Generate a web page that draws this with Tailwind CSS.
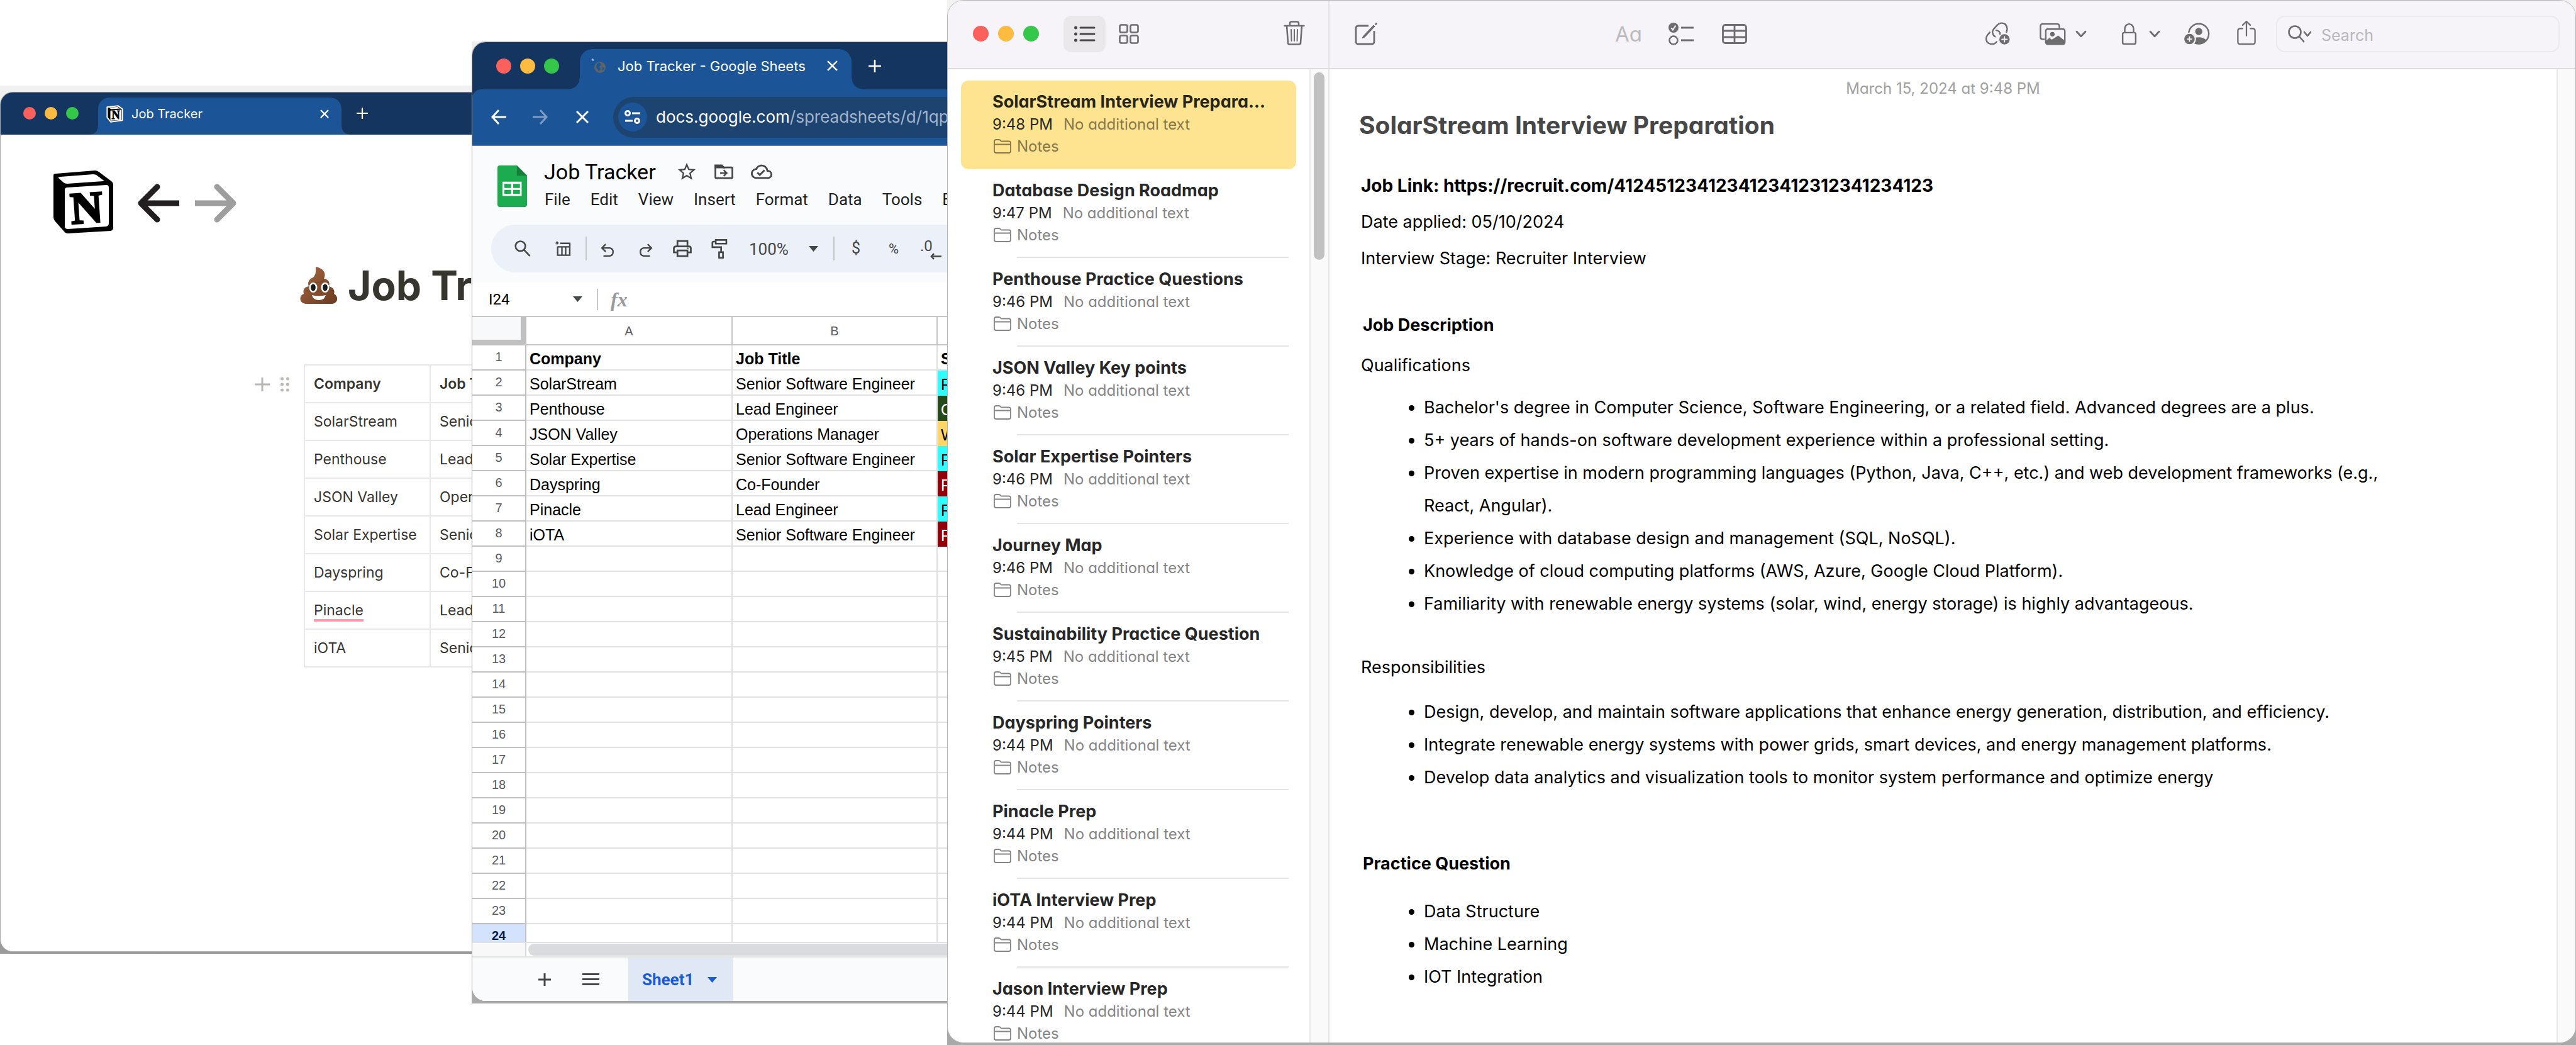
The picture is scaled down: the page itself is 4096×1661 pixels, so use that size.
<!DOCTYPE html>
<html lang="en">
<head>
<meta charset="utf-8">
<title>Job search desktop</title>
<script src="https://cdn.jsdelivr.net/npm/@tailwindcss/browser@4"></script>
</head>
<body class="bg-white">
<div class="relative h-screen overflow-hidden font-[Inter,sans-serif]">

  <!-- Notion window -->
  <section aria-label="Notion" class="absolute left-0 top-[136px] bottom-[145px] w-[1200px] overflow-hidden bg-gradient-to-b from-[#f1f1f1] to-[#9a9a9a] pt-[10px] pb-[3px]">
    <div class="flex h-full flex-col overflow-hidden rounded-[20px] border border-[#a9a9a9] bg-white">
      <header class="flex h-[67px] shrink-0 items-end bg-[#13355f] pl-[36px]">
        <div class="mb-[24px] flex gap-[14px]">
          <span class="size-[20px] rounded-full bg-[#fc605c]"></span>
          <span class="size-[20px] rounded-full bg-[#fdbc40]"></span>
          <span class="size-[20px] rounded-full bg-[#34c749]"></span>
        </div>
        <div class="relative ml-[31px] flex h-[59px] w-[387px] items-center rounded-t-[18px] bg-[#1b5497] px-[13px] text-white">
          <svg class="absolute -left-[16px] bottom-0" width="16" height="16" fill="#1b5497" aria-hidden="true"><path d="M0 16Q16 16 16 0V16Z"/></svg>
          <svg class="absolute -right-[16px] bottom-0" width="16" height="16" fill="#1b5497" aria-hidden="true"><path d="M16 16Q0 16 0 0V16Z"/></svg>
          <svg class="mb-[8px]" width="27" height="28" viewBox="-5 -5 105 110" aria-hidden="true"><path d="M0 8 68 0 95 20V90L22 100 0 72Z" fill="#000" stroke="#fff" stroke-width="8" stroke-linejoin="round"/><path d="M12 11 64 7 80 17 24 21Z" fill="#fff"/><path d="M20 32Q20 28 25 28L84 24Q88 24 88 28V84Q88 88 84 88L24 92Q20 92 20 88Z" fill="#fff"/><text x="28" y="82" font-family="Liberation Serif" font-weight="bold" font-size="72" stroke="#000" stroke-width="3">N</text></svg>
          <span class="mb-[8px] ml-[13px] text-[20px] leading-[28px]">Job Tracker</span>
          <button aria-label="Close tab" class="mb-[8px] ml-auto mr-[6px]"><svg width="16" height="16" viewBox="0 0 16 16" stroke="#fff" stroke-width="2.4"><path d="M2 2 14 14M14 2 2 14"/></svg></button>
        </div>
        <button aria-label="New tab" class="mb-[25px] ml-[24px]"><svg width="18" height="18" viewBox="0 0 18 18" stroke="#fff" stroke-width="2.2"><path d="M9 0V18M0 9H18"/></svg></button>
      </header>
      <main class="text-[#37352f]">
        <div class="flex items-center pl-[84px] pt-[57px]">
          <svg width="95" height="100" viewBox="0 0 95 100" role="img" aria-label="Notion logo"><path d="M0 8Q0 5 4 5L66 0Q69 0 72 2L92 17Q95 19 95 22V91Q95 95 91 96L23 100Q19 100 17 97L2 80Q0 77 0 74Z"/><path d="M8 12Q7 10 11 10L63 6Q66 6 68 7L80 16Q82 17 79 17L22 21Q18 21 16 19Z" fill="#fff"/><path d="M18 31Q18 27 22 27L84 23Q88 23 88 27V84Q88 88 84 89L23 93Q18 93 18 89Z" fill="#fff"/><text x="27" y="83" font-family="Liberation Serif" font-weight="bold" font-size="71" stroke="#000" stroke-width="3" transform="rotate(-4 53 60)">N</text></svg>
          <button aria-label="Back" class="ml-[39px] pt-[4px]"><svg width="66" height="62" viewBox="0 0 66 62" fill="none" stroke="#231f20" stroke-width="9"><path d="M31 5 5 31 31 57" stroke-linecap="round" stroke-linejoin="round"/><path d="M5 31H66"/></svg></button>
          <button aria-label="Forward" class="ml-[25px] pt-[4px]"><svg width="66" height="62" viewBox="0 0 66 62" fill="none" stroke="#9e9e9e" stroke-width="9"><path d="M35 5 61 31 35 57" stroke-linecap="round" stroke-linejoin="round"/><path d="M61 31H0"/></svg></button>
        </div>
        <div class="mt-[43px] flex items-center gap-[16px] pl-[476px]">
          <svg width="60" height="60" viewBox="0 0 60 60" aria-hidden="true">
            <defs><linearGradient id="br" x1="0" y1="0" x2="1" y2="1"><stop offset="0" stop-color="#a5683f"/><stop offset="1" stop-color="#6b3a20"/></linearGradient></defs>
            <path d="M25 0C38 3 42 10 38 19 46 20 48 26 46 31 53 33 56 38 54 43 61 46 62 58 50 59H10C-2 58-2 46 6 43 4 36 8 32 14 31 11 25 15 19 21 17 26 12 25 6 25 0Z" fill="url(#br)"/>
            <path d="M39 19C36 25 26 26 20 25M46 31C40 40 20 41 10 38" fill="none" stroke="#7a4729" stroke-width="1.5"/>
            <ellipse cx="21" cy="33" rx="6.500" ry="8" fill="#fff"/><ellipse cx="40" cy="33" rx="6.500" ry="8" fill="#fff"/>
            <ellipse cx="21" cy="33" rx="3.800" ry="5.500" fill="#1a1a1a"/><ellipse cx="40" cy="33" rx="3.800" ry="5.500" fill="#1a1a1a"/>
            <path d="M19 45Q30 48 41 45 39 53 30 53 21 53 19 45Z" fill="#fff"/>
          </svg>
          <h1 class="whitespace-nowrap text-[64px] font-bold leading-[80px]">Job Tracker</h1>
        </div>
        <div class="mt-[85px] flex pl-[404px]">
          <button aria-label="Add block" class="mt-[21px] h-[22px]"><svg width="24" height="22" viewBox="0 0 24 22" stroke="#b9b8b5" stroke-width="3"><path d="M12 0V22M0 11H24"/></svg></button>
          <button aria-label="Drag block" class="ml-[17px] mt-[20px] h-[24px]"><svg width="14" height="24" viewBox="0 0 14 24" fill="#b9b8b5"><circle cx="2.500" cy="3" r="2.500"/><circle cx="11.500" cy="3" r="2.500"/><circle cx="2.500" cy="12" r="2.500"/><circle cx="11.500" cy="12" r="2.500"/><circle cx="2.500" cy="21" r="2.500"/><circle cx="11.500" cy="21" r="2.500"/></svg></button>
          <table id="notion" class="ml-[23px] w-[620px] table-fixed border-collapse text-[23px] leading-[28px] [&_td]:h-[60px] [&_td]:border-2 [&_td]:border-[#e9e9e7] [&_td]:px-[14px] [&_td]:whitespace-nowrap [&_th]:h-[60px] [&_th]:border-2 [&_th]:border-[#e9e9e7] [&_th]:px-[14px] [&_th]:text-left [&_th]:font-semibold">
            <colgroup><col class="w-[200px]"><col></colgroup>
            <thead><tr><th>Company</th><th>Job Title</th></tr></thead>
            <tbody></tbody>
          </table>
        </div>
      </main>
    </div>
  </section>

  <!-- Google Sheets window -->
  <section aria-label="Google Sheets" class="absolute left-[750px] top-[66px] bottom-[66px] w-[1000px] overflow-hidden bg-gradient-to-b from-[#ececec] to-[#a9a9a9] pb-[3px]">
    <div class="flex h-full flex-col overflow-hidden rounded-[22px] border border-[#a0a0a0] bg-white">
      <header class="shrink-0 bg-[#13355f]">
        <div class="flex h-[75px] items-end pl-[38px]">
          <div class="mb-[25px] flex gap-[14px]">
            <span class="size-[24px] rounded-full bg-[#fc605c]"></span>
            <span class="size-[24px] rounded-full bg-[#fdbc40]"></span>
            <span class="size-[24px] rounded-full bg-[#34c749]"></span>
          </div>
          <div class="relative ml-[33px] flex h-[64px] w-[432px] items-center rounded-t-[20px] bg-[#1b5497] pb-[11px] pl-[18px] pr-[22px] text-white">
            <svg class="absolute -left-[22px] bottom-0" width="22" height="22" fill="#1b5497" aria-hidden="true"><path d="M0 22Q22 22 22 0V22Z"/></svg>
            <svg class="absolute -right-[22px] bottom-0" width="22" height="22" fill="#1b5497" aria-hidden="true"><path d="M22 22Q0 22 0 0V22Z"/></svg>
            <svg width="24" height="28" viewBox="0 0 24 28" aria-hidden="true"><path d="M1 3 4 5" stroke="#9fb3d0" stroke-width="3"/><circle cx="14" cy="16" r="9" fill="#5f6368"/><path d="M13 8 16 12 13 15 15 19 12 22 8 16 9 11ZM18 15 21 17 18 22Z" fill="#1b5497"/></svg>
            <span class="ml-[18px] whitespace-nowrap text-[22px] leading-[28px]">Job Tracker - Google Sheets</span>
            <button aria-label="Close tab" class="ml-auto"><svg width="17" height="17" viewBox="0 0 16 16" stroke="#fff" stroke-width="2.4"><path d="M1 1 15 15M15 1 1 15"/></svg></button>
          </div>
          <button aria-label="New tab" class="mb-[27px] ml-[27px]"><svg width="20" height="20" viewBox="0 0 20 20" stroke="#fff" stroke-width="2.6"><path d="M10 0V20M0 10H20"/></svg></button>
        </div>
        <div class="flex h-[90px] items-center rounded-tl-[14px] border-b-2 border-[#4a7ab5] bg-[#1b5497] pl-[30px]">
          <button aria-label="Back"><svg width="24" height="24" viewBox="0 0 24 24" fill="none" stroke="#fff" stroke-width="3"><path d="M12 1 2 12 12 23M2 12H24"/></svg></button>
          <button aria-label="Forward" class="ml-[42px]"><svg width="24" height="24" viewBox="0 0 24 24" fill="none" stroke="#7f9cc4" stroke-width="3"><path d="M12 1 22 12 12 23M22 12H0"/></svg></button>
          <button aria-label="Stop" class="ml-[45px]"><svg width="20" height="20" viewBox="0 0 20 20" stroke="#fff" stroke-width="3"><path d="M1 1 19 19M19 1 1 19"/></svg></button>
          <div class="ml-[39px] flex h-[65px] flex-1 items-center rounded-l-full bg-[#1d4370] pl-[8px]">
            <button aria-label="Site settings" class="flex size-[46px] items-center justify-center rounded-full bg-[#1b5497]"><svg width="26" height="24" viewBox="0 0 26 24" fill="none" stroke="#fff" stroke-width="3"><circle cx="5" cy="6" r="3.500"/><path d="M12 6H25M1 18H13"/><circle cx="20" cy="18" r="3.500"/></svg></button>
            <a href="#" class="ml-[14px] whitespace-nowrap text-[26px] leading-[36px] text-white">docs.google.com<span class="text-[#a3b5ca]">/spreadsheets/d/1qpV</span></a>
          </div>
        </div>
      </header>
      <div class="shrink-0 bg-[#f9fbfd]">
        <div class="flex h-[125px] pl-[40px] pt-[31px]">
          <svg width="47" height="66" viewBox="60 86 154 216" role="img" aria-label="Sheets"><path d="M60 98q0-12 12-12h89l53 52v152q0 12-12 12H72q-12 0-12-12Z" fill="#1dab4f"/><path d="M161 86 214 139H161Z" fill="#15803a"/><path d="M86 170h100v75H86ZM96 182v21h35v-21ZM142 182v21h35v-21ZM96 213v21h35v-21ZM142 213v21h35v-21Z" fill="#fff" fill-rule="evenodd"/></svg>
          <div class="ml-[27px] -mt-[11px]">
            <div class="flex h-[42px] items-center">
              <h2 class="w-[174px] whitespace-nowrap font-[Roboto,sans-serif] text-[34px] leading-[42px] text-black">Job Tracker</h2>
              <button aria-label="Star" class="ml-[36px]"><svg width="34" height="34" viewBox="0 0 24 24" fill="#444746"><path d="M22 9.240l-7.190-.62L12 2 9.190 8.630 2 9.240l5.460 4.730L5.820 21 12 17.270 18.180 21l-1.630-7.030L22 9.240zM12 15.400l-3.760 2.270 1-4.280-3.320-2.880 4.380-.38L12 6.100l1.710 4.040 4.380.38-3.320 2.880 1 4.280L12 15.400z"/></svg></button>
              <button aria-label="Move" class="ml-[27px]"><svg width="30" height="24" viewBox="1199 85 100 78" fill="none" stroke="#444746" stroke-width="9"><path d="M1204 92H1238L1248 101H1290Q1294 101 1294 106V152Q1294 158 1288 158H1210Q1204 158 1204 152Z"/><path d="M1203 90H1238L1248 101H1203Z" fill="#444746"/><path d="M1229 131H1262M1248 115 1264 131 1248 147" stroke-width="8"/></svg></button>
              <button aria-label="Saved to Drive" class="ml-[28px]"><svg width="34" height="34" viewBox="0 0 24 24" fill="#444746"><path d="M19.350 10.040A7.490 7.490 0 0 0 12 4C9.110 4 6.600 5.640 5.350 8.040A5.994 5.994 0 0 0 0 14c0 3.310 2.690 6 6 6h13c2.760 0 5-2.240 5-5 0-2.640-2.050-4.780-4.650-4.960zM19 18H6c-2.210 0-4-1.790-4-4 0-2.050 1.530-3.760 3.560-3.970l1.070-.11.5-.95A5.469 5.469 0 0 1 12 6c2.620 0 4.880 1.860 5.390 4.430l.3 1.500 1.530.11A2.980 2.980 0 0 1 22 15c0 1.650-1.350 3-3 3zm-9-3.820l-2.090-2.090L6.500 13.500 10 17l6.010-6.010-1.410-1.410z"/></svg></button>
            </div>
            <nav class="mt-[5px] flex gap-[32px] pl-[1px] font-[Roboto,sans-serif] text-[26px] leading-[36px] text-[#1f1f1f]">
              <button>File</button><button>Edit</button><button>View</button><button>Insert</button><button>Format</button><button>Data</button><button>Tools</button><button>Extensions</button>
            </nav>
          </div>
        </div>
        <div class="mb-[16px] ml-[30px] flex h-[76px] items-center rounded-l-full bg-[#ecf0f9] pl-[18px] font-[Roboto,sans-serif] text-[#444746]">
          <button aria-label="Search menus" class="flex w-[64px] justify-center"><svg width="26" height="28" viewBox="146 474 90 94" fill="none" stroke="#444746" stroke-width="9"><circle cx="179" cy="508" r="27"/><path d="M198 528 231 562"/></svg></button>
          <button aria-label="Insert table" class="flex w-[64px] justify-center"><svg width="26" height="26" viewBox="358 482 88 88" fill="none" stroke="#444746" stroke-width="8"><path d="M388 498H439V562H374V515M374 517H439M397 517V562M417 517V562"/><path d="M371 484 375 492 383 496 375 500 371 508 367 500 359 496 367 492Z" fill="#444746" stroke="none"/></svg></button>
          <span class="mx-[4px] h-[38px] w-[2px] bg-[#c7c7c7]"></span>
          <button aria-label="Undo" class="flex w-[59px] justify-center pt-[6px]"><svg width="24" height="22" viewBox="602 494 78 74" fill="none" stroke="#444746" stroke-width="8"><path d="M628 498 608 518 628 538M608 518H650A22 22 0 0 1 650 561H616"/></svg></button>
          <button aria-label="Redo" class="flex w-[59px] justify-center pt-[6px]"><svg width="24" height="22" viewBox="797 494 78 74" fill="none" stroke="#444746" stroke-width="8"><path d="M849 498 869 518 849 538M869 518H827A22 22 0 0 0 827 561H861"/></svg></button>
          <button aria-label="Print" class="flex w-[59px] justify-center"><svg width="30" height="28" viewBox="983 482 100 91" fill="none" stroke="#444746" stroke-width="9"><path d="M1007 515V488H1060V515M1003 548H988V527Q988 516 1000 516H1067Q1078 516 1078 527V548H1064M1007 538H1060V568H1007Z"/><circle cx="1062" cy="526" r="4" fill="#444746" stroke="none"/></svg></button>
          <button aria-label="Paint format" class="flex w-[59px] justify-center"><svg width="26" height="33" viewBox="1180 476 88 108" fill="none" stroke="#444746" stroke-width="9"><path d="M1204 482H1261V502H1204ZM1204 491H1193Q1186 491 1186 498V521H1233V548M1222 548H1243V578H1222Z"/></svg></button>
          <label class="relative ml-[18px] flex items-center"><span class="sr-only">Zoom</span><select class="w-[110px] appearance-none pt-[2px] text-[26px] leading-[36px]"><option>100%</option></select><svg class="pointer-events-none absolute right-0" width="15" height="9" fill="#444746"><path d="M0 0H15L7.500 9Z"/></svg></label>
          <span class="ml-[24px] mr-[4px] h-[38px] w-[2px] bg-[#c7c7c7]"></span>
          <button class="w-[60px] text-[25px]">$</button>
          <button class="w-[60px] text-[22px]">%</button>
          <button aria-label="Decrease decimal places" class="relative w-[60px] pb-[8px] text-left text-[24px] leading-[28px]"><span class="pl-[12px]">.0</span><svg class="absolute left-[28px] bottom-0" width="18" height="11" viewBox="0 0 18 11" fill="none" stroke="#444746" stroke-width="2.500"><path d="M6 1 2 5.500 6 10M2 5.500H18"/></svg></button>
        </div>
      </div>
      <div class="flex h-[53px] shrink-0 items-center pl-[26px]">
        <input aria-label="Cell name" value="I24" class="w-[134px] font-[Roboto,sans-serif] text-[24px] leading-[30px] text-black">
        <svg width="15" height="9" fill="#444746" aria-hidden="true"><path d="M0 0H15L7.500 9Z"/></svg>
        <span class="ml-[23px] h-[34px] w-[2px] bg-[#c7c7c7]"></span>
        <span class="ml-[20px] font-['Liberation_Serif',serif] text-[32px] font-bold italic leading-[36px] text-[#9a9a9a]">fx</span>
      </div>
      <div class="min-h-0 flex-1 overflow-hidden border-t-2 border-[#c4c7c5]">
        <table id="sheet" class="w-[1000px] table-fixed border-separate border-spacing-0 font-['Liberation_Sans',Arial,sans-serif] text-[25px] leading-[32px] text-black">
          <colgroup><col class="w-[86px]"><col class="w-[328px]"><col class="w-[326px]"><col></colgroup>
          <thead><tr class="text-[20px] text-[#575b5f] [&_th]:font-normal"><th class="h-[45px] border-b-[9px] border-r-[9px] border-[#c0c0c0] bg-[#f8f9fb]"></th><th class="border-b-2 border-r-2 border-[#c4c7c5]">A</th><th class="border-b-2 border-r-2 border-[#c4c7c5]">B</th><th class="border-b-2 border-[#c4c7c5]">C</th></tr></thead>
          <tbody></tbody>
        </table>
      </div>
      <div class="flex h-[25px] shrink-0 border-y-2 border-[#e1e3e1]">
        <span class="w-[86px] border-r-2 border-[#d9d9d9] bg-[#f8f8f8]"></span>
        <span class="my-px ml-[3px] flex-1 rounded-l-full bg-[#dadbdf]"></span>
      </div>
      <footer class="flex h-[69px] shrink-0 items-center bg-[#f9fbfd] pl-[105px]">
        <button aria-label="Add sheet"><svg width="20" height="20" viewBox="0 0 20 20" stroke="#444746" stroke-width="3"><path d="M10 0V20M0 10H20"/></svg></button>
        <button aria-label="All sheets" class="ml-[50px]"><svg width="27" height="19" viewBox="0 0 27 19" stroke="#444746" stroke-width="3"><path d="M0 1.500H27M0 9.500H27M0 17.500H27"/></svg></button>
        <button class="ml-[46px] flex h-full w-[166px] items-center bg-[#e1e8f5] pl-[22px] pt-[2px] font-[Roboto,sans-serif] text-[26px] font-bold text-[#185bd3]">Sheet1<svg class="ml-[22px]" width="15" height="9" fill="#185bd3" aria-hidden="true"><path d="M0 0H15L7.500 9Z"/></svg></button>
      </footer>
    </div>
  </section>

  <!-- Apple Notes window -->
  <section aria-label="Notes" class="absolute left-[1506px] right-0 top-0 bottom-0 overflow-hidden bg-gradient-to-b from-[#f3f3f3] to-[#a9a9a9] pb-[3px]">
    <div class="flex h-full flex-col overflow-hidden rounded-[26px] border border-[#b5b5b5] bg-white">
      <header class="flex h-[109px] shrink-0 border-b-2 border-[#dddbdd] bg-[#f6f4f8] pb-[2px]">
        <div class="-mb-[2px] flex w-[607px] shrink-0 items-center border-r-2 border-[#e3e1e4] pl-[40px] pr-[37px] pb-[2px]">
          <div class="flex gap-[15px]">
            <span class="size-[25px] rounded-full bg-[#fc605c]"></span>
            <span class="size-[25px] rounded-full bg-[#fdbc40]"></span>
            <span class="size-[25px] rounded-full bg-[#34c749]"></span>
          </div>
          <button aria-label="List view" class="ml-[39px] flex h-[58px] w-[67px] items-center justify-center rounded-[12px] bg-[#eae8eb]"><svg width="34" height="26" viewBox="0 0 34 26" stroke="#48474a" stroke-width="3" stroke-linecap="round"><path d="M10 3H32M10 13H32M10 23H32"/><g fill="#48474a" stroke="none"><circle cx="2.500" cy="3" r="2.500"/><circle cx="2.500" cy="13" r="2.500"/><circle cx="2.500" cy="23" r="2.500"/></g></svg></button>
          <button aria-label="Gallery view" class="ml-[3px] flex w-[67px] justify-center"><svg width="32" height="32" viewBox="0 0 32 32" fill="none" stroke="#6d6c6f" stroke-width="2.600"><rect x="1.500" y="1.500" width="12" height="12" rx="2.500"/><rect x="18.500" y="1.500" width="12" height="12" rx="2.500"/><rect x="1.500" y="18.500" width="12" height="12" rx="2.500"/><rect x="18.500" y="18.500" width="12" height="12" rx="2.500"/></svg></button>
          <button aria-label="Delete" class="ml-auto pb-[2px]"><svg width="34" height="39" viewBox="0 0 34 39" fill="none" stroke="#6d6c6f" stroke-width="2.600" stroke-linecap="round" stroke-linejoin="round"><path d="M1.500 8H32.500M10 8V4Q10 1.500 12.500 1.500H21.500Q24 1.500 24 4V8M5 8 7 35Q7 37.500 9.500 37.500H24.500Q27 37.500 27 35L29 8"/><path d="M12 14 12.500 32M17 14V32M22 14 21.500 32" stroke-width="2"/></svg></button>
        </div>
        <div class="flex min-w-0 flex-1 items-center justify-between pl-[40px] pr-[25px] text-[#6d6c6f]">
          <button aria-label="New note"><svg width="36" height="36" viewBox="0 0 36 36" fill="none" stroke="#6d6c6f" stroke-width="2.800" stroke-linejoin="round"><path d="M22 5H6Q2 5 2 9V30Q2 34 6 34H27Q31 34 31 30V13"/><path d="M30 4 14 21 12 24.500 16 23 32 6Z" fill="#6d6c6f" stroke-width="1"/><path d="M33 1 35 3" stroke-width="3.500"/></svg></button>
          <div class="flex items-center">
            <button class="text-[33px] leading-[40px] text-[#bcbabd] [font-feature-settings:'cv11']">Aa</button>
            <button aria-label="Checklist" class="ml-[42px]"><svg width="40" height="36" viewBox="0 0 40 36" fill="none" stroke="#6d6c6f" stroke-width="3"><circle cx="8" cy="8" r="8" fill="#6d6c6f" stroke="none"/><path d="M4.500 8.500 7 11.500 11.500 4.500" stroke="#f6f4f8" stroke-width="2"/><circle cx="8" cy="28" r="6.500" stroke-width="2.600"/><path d="M20 8H40M20 28H40"/></svg></button>
            <button aria-label="Table" class="ml-[45px]"><svg width="40" height="32" viewBox="0 0 40 32" fill="none" stroke="#6d6c6f" stroke-width="2.800"><rect x="1.500" y="1.500" width="37" height="29" rx="4"/><path d="M1 11H39M1 21H39M20 1V31"/></svg></button>
          </div>
          <div class="flex items-center">
            <button aria-label="Add link"><svg width="41" height="39" viewBox="36 50 136 130" fill="none" stroke="#6d6c6f" stroke-width="8" stroke-linecap="round"><path d="M150 107C158 92 153 70 140 63 126 54 110 60 99 72L83 90C72 103 76 122 90 131M62 108 50 122C38 137 42 158 56 166 72 174 88 170 98 158M96 97C110 98 117 108 116 118"/><circle cx="140" cy="145" r="30" fill="#6d6c6f" stroke="#f6f4f8" stroke-width="5"/><path d="M140 131V159M126 145H154" stroke="#f6f4f8" stroke-width="6"/></svg></button>
            <button aria-label="Media" class="ml-[46px] flex items-center gap-[15px]"><svg width="42" height="36" viewBox="326 60 140 120" fill="none" stroke="#6d6c6f" stroke-width="8"><path d="M354 148H342Q331 148 331 137V78Q331 67 342 67H420Q431 67 431 78V90"/><rect x="359" y="94" width="101" height="80" rx="10"/><circle cx="394" cy="121" r="12" fill="#6d6c6f" stroke="none"/><path d="M360 156 378 141 391 150 425 128 460 156V172H360Z" fill="#6d6c6f" stroke="none"/></svg><svg width="18" height="12" viewBox="516 101 56 38" fill="none" stroke="#6d6c6f" stroke-width="9" stroke-linecap="round" stroke-linejoin="round"><path d="M522 108 544 132 566 108"/></svg></button>
            <button aria-label="Lock" class="ml-[55px] flex items-center gap-[19px]"><svg width="25" height="36" viewBox="754 60 82 118" fill="none" stroke="#6d6c6f" stroke-width="8"><rect x="761" y="112" width="68" height="59" rx="8"/><path d="M772 112V92A23 25 0 0 1 818 92V112"/></svg><svg width="18" height="12" viewBox="516 101 56 38" fill="none" stroke="#6d6c6f" stroke-width="9" stroke-linecap="round" stroke-linejoin="round"><path d="M522 108 544 132 566 108"/></svg></button>
            <button aria-label="Share with people" class="ml-[37px]"><svg width="42" height="37" viewBox="1077 55 139 123" fill="none" stroke="#6d6c6f" stroke-width="8"><circle cx="1157" cy="117" r="53"/><circle cx="1157" cy="105" r="19" fill="#6d6c6f" stroke="none"/><path d="M1116 152Q1130 136 1157 136 1184 136 1198 152 1182 171 1157 171 1135 171 1116 152Z" fill="#6d6c6f" stroke="none"/><circle cx="1108" cy="145" r="31" fill="#6d6c6f" stroke="#f6f4f8" stroke-width="7"/><path d="M1108 131V159M1094 145H1122" stroke="#f6f4f8" stroke-width="6"/></svg></button>
            <button aria-label="Export" class="ml-[42px] pb-[4px]"><svg width="32" height="40" viewBox="1354 45 104 132" fill="none" stroke="#6d6c6f" stroke-width="7.500" stroke-linecap="round" stroke-linejoin="round"><path d="M1386 89H1373Q1361 89 1361 101V159Q1361 171 1373 171H1439Q1451 171 1451 159V101Q1451 89 1439 89H1426M1406 127V53M1386 71 1406 52 1426 71"/></svg></button>
            <label class="ml-[31px] flex h-[58px] w-[451px] items-center rounded-[14px] border-2 border-[#ebe9ec] pl-[17px]"><svg class="mr-[15px]" width="38" height="28" viewBox="0 0 38 28" fill="none" stroke="#6d6c6f" stroke-width="2.600" stroke-linecap="round" stroke-linejoin="round"><circle cx="11" cy="11" r="9.500"/><path d="M18 18 25 26M26 11 31 17 36 11"/></svg><span class="sr-only">Search</span><input placeholder="Search" class="w-[300px] pt-[4px] text-[25px] leading-[32px] placeholder:text-[#b9b7ba]"></label>
          </div>
        </div>
      </header>
      <div class="flex min-h-0 flex-1">
        <div class="flex w-[607px] shrink-0 border-r-2 border-[#e6e6e6]">
          <ul id="notes" class="min-w-0 flex-1 overflow-hidden pl-[21px] pr-[21px] pt-[18px] [font-feature-settings:'cv11']"></ul>
          <div class="w-[30px] shrink-0 border-l-2 border-[#e9e9e9] bg-[#fafafa] pl-[5px] pt-[5px]"><div class="h-[298px] w-[17px] rounded-full bg-[#c1c1c1]"></div></div>
        </div>
        <article class="min-w-0 flex-1 overflow-hidden pl-[50px] text-[27px] text-black">
          <p class="-ml-[50px] pt-[13px] text-center text-[24px] leading-[36px] text-[#a0a0a0] [font-feature-settings:'cv11']">March 15, 2024 at 9:48 PM</p>
          <h1 class="-ml-[3px] mt-[12px] text-[39px] font-bold leading-[56px] text-[#474747] [font-feature-settings:'cv11']">SolarStream Interview Preparation</h1>
          <p class="mt-[39px] text-[28px] font-bold leading-[58px]">Job Link: <a href="#">https://recruit.com/4124512341234123412312341234123</a></p>
          <p class="leading-[58px]">Date applied: 05/10/2024</p>
          <p class="leading-[58px]">Interview Stage: Recruiter Interview</p>
          <h2 class="mt-[48px] pl-[3px] font-bold leading-[58px]">Job Description</h2>
          <p class="mt-[6px] leading-[58px]">Qualifications</p>
          <ul class="mt-[12px] list-disc pl-[100px] pr-[280px] leading-[52px]">
            <li>Bachelor's degree in Computer Science, Software Engineering, or a related field. Advanced degrees are a plus.</li>
            <li>5+ years of hands-on software development experience within a professional setting.</li>
            <li>Proven expertise in modern programming languages (Python, Java, C++, etc.) and web development frameworks (e.g., React, Angular).</li>
            <li>Experience with database design and management (SQL, NoSQL).</li>
            <li>Knowledge of cloud computing platforms (AWS, Azure, Google Cloud Platform).</li>
            <li>Familiarity with renewable energy systems (solar, wind, energy storage) is highly advantageous.</li>
          </ul>
          <p class="mt-[46px] leading-[58px]">Responsibilities</p>
          <ul class="mt-[16px] list-disc pl-[100px] pr-[280px] leading-[52px]">
            <li>Design, develop, and maintain software applications that enhance energy generation, distribution, and efficiency.</li>
            <li>Integrate renewable energy systems with power grids, smart devices, and energy management platforms.</li>
            <li>Develop data analytics and visualization tools to monitor system performance and optimize energy</li>
          </ul>
          <h2 class="mt-[82px] pl-[3px] font-bold leading-[58px]">Practice Question</h2>
          <ul class="mt-[21px] list-disc pl-[100px] leading-[52px]">
            <li>Data Structure</li>
            <li>Machine Learning</li>
            <li>IOT Integration</li>
          </ul>
        </article>
        <div class="w-[30px] shrink-0 border-l-2 border-[#e9e9e9] bg-[#fafafa]"></div>
      </div>
    </div>
  </section>
</div>

<script>
const jobs = [
  ['SolarStream', 'Senior Software Engineer', 'Recruiter', 'bg-[#2ffcff]'],
  ['Penthouse', 'Lead Engineer', 'Offer', 'bg-[#264a17] text-white'],
  ['JSON Valley', 'Operations Manager', 'Waiting', 'bg-[#ffd666]'],
  ['Solar Expertise', 'Senior Software Engineer', 'Recruiter', 'bg-[#2ffcff]'],
  ['Dayspring', 'Co-Founder', 'Rejected', 'bg-[#930209] text-white'],
  ['Pinacle', 'Lead Engineer', 'Recruiter', 'bg-[#2ffcff]'],
  ['iOTA', 'Senior Software Engineer', 'Rejected', 'bg-[#930209] text-white'],
];

document.querySelector('#notion tbody').innerHTML = jobs.map(([company, title]) =>
  `<tr><td>${company === 'Pinacle' ? '<span class="border-b-[4px] border-[#ff9aad]">Pinacle</span>' : company}</td><td>${title}</td></tr>`).join('');

let rows = '';
for (let n = 1; n <= 24; n++) {
  const [a, b, c, tone] = n === 1 ? ['Company', 'Job Title', 'Status', ''] : jobs[n - 2] || ['', '', '', ''];
  const head = n === 24 ? 'bg-[#d3e3fd] font-bold text-[#041e49]' : 'font-normal text-[#575b5f]';
  rows += `<tr class="${n === 1 ? 'font-bold' : ''}">
    <th class="h-[40px] border-b-2 border-r-2 border-[#c0c0c0] pb-[2px] text-[20px] ${head}">${n}</th>
    <td class="border-b-2 border-r-2 border-[#e1e1e1] pl-[5px] pt-[3px]">${a}</td>
    <td class="border-b-2 border-r-2 border-[#e1e1e1] pl-[5px] pt-[3px]">${b}</td>
    <td class="pl-[5px] pt-[3px] ${tone || 'border-b-2 border-[#e1e1e1]'}">${c}</td></tr>`;
}
document.querySelector('#sheet tbody').innerHTML = rows;

const notes = [
  ['SolarStream Interview Prepara...', '9:48'], ['Database Design Roadmap', '9:47'], ['Penthouse Practice Questions', '9:46'],
  ['JSON Valley Key points', '9:46'], ['Solar Expertise Pointers', '9:46'], ['Journey Map', '9:46'],
  ['Sustainability Practice Question', '9:45'], ['Dayspring Pointers', '9:44'], ['Pinacle Prep', '9:44'],
  ['iOTA Interview Prep', '9:44'], ['Jason Interview Prep', '9:44'],
];
document.querySelector('#notes').innerHTML = notes.map(([title, time], i) => `
  <li class="relative h-[141px] whitespace-nowrap pl-[50px] pt-[16px] text-[24px] leading-[35px] ${i === 0 ? 'rounded-[12px] bg-[#fee491]' : ''}">
    <h3 class="text-[27px] font-bold leading-[36px] ${i === 0 ? 'text-[#27251a]' : 'text-[#272727]'}">${title}</h3>
    <p class="flex gap-[17px] ${i === 0 ? 'text-[#857749]' : 'text-[#858585]'}"><time class="text-[#272727]">${time} PM</time>No additional text</p>
    <p class="flex items-center gap-[9px] pl-[2px] ${i === 0 ? 'text-[#857749]' : 'text-[#858585]'}"><svg width="28" height="23" viewBox="0 0 28 23" fill="none" stroke="currentColor" stroke-width="1.800"><path d="M1 4Q1 1 4 1H8Q10 1 11 2.500T14 3.500H24Q27 3.500 27 6.500V19Q27 22 24 22H4Q1 22 1 19ZM1 8.500H27"/></svg>Notes</p>
    ${i === 0 ? '' : '<div class="absolute bottom-0 left-[89px] right-[12px] h-[2px] bg-[#e5e5e5]"></div>'}
  </li>`).join('');
</script>
</body>
</html>
